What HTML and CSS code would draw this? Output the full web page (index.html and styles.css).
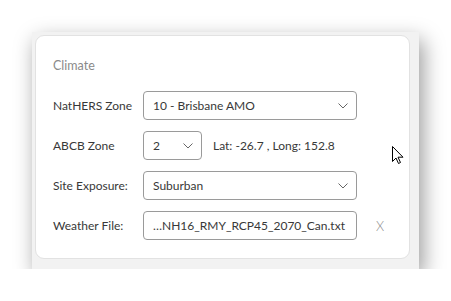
FILE: index.html
```html
<!DOCTYPE html>
<html lang="en">
<head>
    <meta charset="UTF-8">
    <meta name="viewport" content="width=device-width, initial-scale=1.0">
    <title>Climate</title>
    <link rel="stylesheet" href="styles.css">
</head>
<body>
    <div class="window">
        <div class="card">
            <div class="title">Climate</div>
            <div class="form">
                <label class="label">NatHERS Zone</label>
                <div class="select wide">
                    <span>10 - Brisbane AMO</span>
                    <svg class="chevron" viewBox="0 0 10 6"><path d="M0.5 0.5 L5 5 L9.5 0.5" /></svg>
                </div>
                <div></div>

                <label class="label">ABCB Zone</label>
                <div class="inline">
                    <div class="select small">
                        <span>2</span>
                        <svg class="chevron" viewBox="0 0 10 6"><path d="M0.5 0.5 L5 5 L9.5 0.5" /></svg>
                    </div>
                    <span class="coords">Lat: -26.7 , Long: 152.8</span>
                </div>
                <div></div>

                <label class="label">Site Exposure:</label>
                <div class="select wide">
                    <span>Suburban</span>
                    <svg class="chevron" viewBox="0 0 10 6"><path d="M0.5 0.5 L5 5 L9.5 0.5" /></svg>
                </div>
                <div></div>

                <label class="label">Weather File:</label>
                <div class="select wide file">
                    <span>…NH16_RMY_RCP45_2070_Can.txt</span>
                </div>
                <div class="clear">X</div>
            </div>
        </div>
    </div>
    <svg class="cursor" viewBox="0 0 13 19" width="13" height="19">
        <path d="M0.5 0.5 L0.5 15.5 L4 12 L6.5 17.5 L8.5 16.5 L6 11.2 L11 11.2 Z" />
    </svg>
</body>
</html>
```

FILE: styles.css
```css
body {
    margin: 0;
    background-color: #fff;
    font-family: 'Lato', 'Noto Sans', sans-serif;
    font-size: 12px;
    color: #383838;
}

.window {
    margin: 32px 0 0 32px;
    width: 387px;
    height: 237px;
    padding: 3px;
    box-sizing: border-box;
    background-color: #f2f2f2;
    box-shadow: 4px 8px 20px rgba(0, 0, 0, 0.4);
}

.card {
    height: 224px;
    width: 375px;
    box-sizing: border-box;
    background-color: #fff;
    border-radius: 9px;
    border: 1px solid #e2e2e2;
    padding: 22px 17px 0 17px;
}

.title {
    color: #8a8a8a;
    font-size: 12.5px;
    line-height: 16px;
    margin-bottom: 17px;
}

.form {
    display: grid;
    grid-template-columns: 90px 214px 1fr;
    row-gap: 11px;
    align-items: center;
}

.select {
    height: 29px;
    box-sizing: border-box;
    border: 1px solid #9a9a9a;
    border-radius: 4px;
    display: flex;
    align-items: center;
    justify-content: space-between;
    padding: 0 8px 0 9px;
    white-space: nowrap;
    overflow: hidden;
}

.select.small {
    width: 59px;
}

.chevron {
    width: 10px;
    height: 6px;
    flex-shrink: 0;
    fill: none;
    stroke: #666;
    stroke-width: 1;
}

.inline {
    display: flex;
    align-items: center;
    gap: 11px;
    white-space: nowrap;
}

.clear {
    color: #8c8c8c;
    padding-left: 19px;
    font-size: 13px;
    font-weight: 300;
}

.cursor {
    position: absolute;
    left: 392px;
    top: 146px;
}

.cursor path {
    fill: #fff;
    stroke: #000;
    stroke-width: 1;
}
```
